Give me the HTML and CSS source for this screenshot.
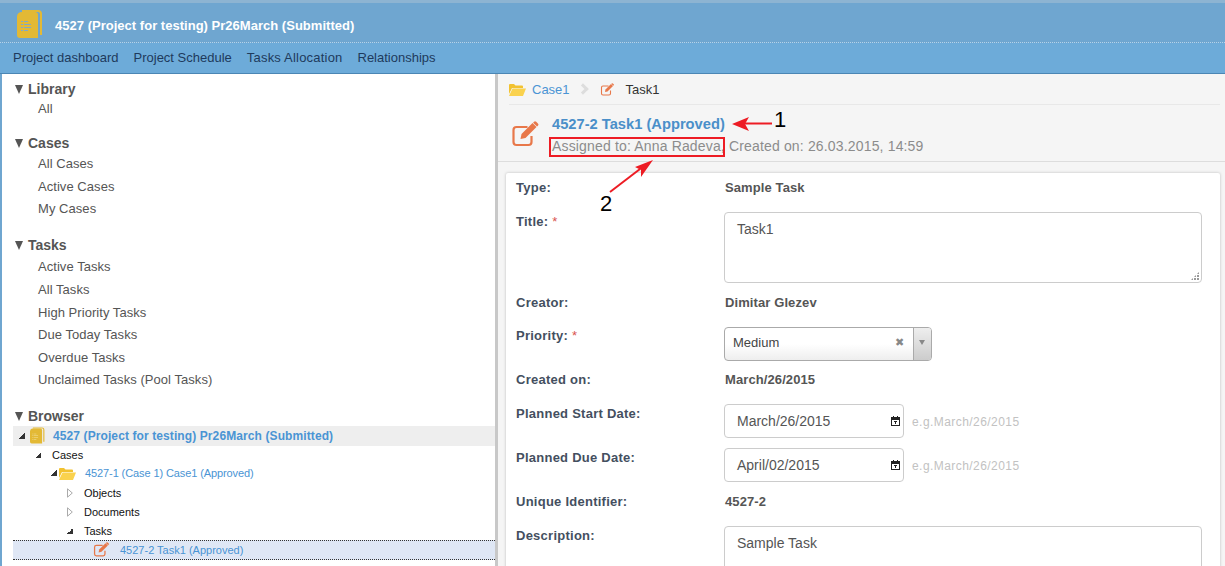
FILE: index.html
```html
<!DOCTYPE html>
<html lang="en">
<head>
    <meta charset="UTF-8">
    <meta name="viewport" content="width=device-width, initial-scale=1.0">
    <title>4527 Task1</title>
    <link rel="stylesheet" href="styles.css">
</head>
<body>

<svg width="0" height="0" class="defs">
    <symbol id="book" viewBox="0 0 26 28">
        <path d="M5 1h16a3 3 0 0 1 3 3v21" fill="none" stroke="#e3b935" stroke-width="2"/>
        <path d="M0 6a5 5 0 0 1 5-4h13a3 3 0 0 1 3 3v23H3a3 3 0 0 1-3-3z" fill="#e3b935"/>
        <path d="M4 11h2v1H4zm0 3h2v1H4zm0 3h2v1H4zm0 3h2v1H4zm3-9h4v1H7zm0 3h7v1H7zm0 3h7v1H7zm0 3h4v1H7z" fill="currentColor"/>
    </symbol>
    <symbol id="edit" viewBox="0 0 28 26">
        <path d="M20 15v6a3 3 0 0 1-3 3H5a3 3 0 0 1-3-3V9a3 3 0 0 1 3-3h11" fill="none" stroke="#e8784a" stroke-width="2.2"/>
        <path d="M10 13 21 2l4 4-11 11-5 1z" fill="#e8784a"/>
        <path d="M22.5.8a1.6 1.6 0 0 1 2.2 0l1.7 1.7a1.6 1.6 0 0 1 0 2.2L25.500 5.600 21.600 1.700z" fill="#e8784a"/>
    </symbol>
    <symbol id="folder" viewBox="0 0 17 13">
        <path d="M0 2a1 1 0 0 1 1-1h4l1.500 1.500H13a1 1 0 0 1 1 1V5H3L0 11z" fill="#f2c230"/>
        <path d="M3.500 5.500H17L14 13H0z" fill="#fad24e"/>
    </symbol>
    <symbol id="cal" viewBox="0 0 9 10">
        <path d="M0 1h2V0h1v1h3V0h1v1h2v9H0zm1 3v5h7V4z" fill="#222"/>
        <path d="M3 5h3v1H3zm1 1h1v2H4z" fill="#222"/>
    </symbol>
    <symbol id="closed" viewBox="0 0 6 10">
        <path d="M.5.800 5.300 5 .5 9.200z" fill="#fff" stroke="#aaa"/>
    </symbol>
</svg>

<div class="header">
    <svg class="header-icon"><use href="#book"/></svg>
    <span class="header-title">4527 (Project for testing) Pr26March (Submitted)</span>
</div>
<div class="nav">
    <a>Project dashboard</a>
    <a>Project Schedule</a>
    <a>Tasks Allocation</a>
    <a>Relationships</a>
</div>

<div class="main">
    <div class="left">
        <div class="section">
            <h3><span class="tri"></span>Library</h3>
            <ul class="links links-first">
                <li>All</li>
            </ul>
        </div>
        <div class="section">
            <h3><span class="tri"></span>Cases</h3>
            <ul class="links">
                <li>All Cases</li>
                <li>Active Cases</li>
                <li>My Cases</li>
            </ul>
        </div>
        <div class="section">
            <h3><span class="tri"></span>Tasks</h3>
            <ul class="links links-tasks">
                <li>Active Tasks</li>
                <li>All Tasks</li>
                <li>High Priority Tasks</li>
                <li>Due Today Tasks</li>
                <li>Overdue Tasks</li>
                <li>Unclaimed Tasks (Pool Tasks)</li>
            </ul>
        </div>
        <div class="section section-browser">
            <h3><span class="tri"></span>Browser</h3>
            <div class="tree">
                <div class="node node-root">
                    <span class="arrow open"></span>
                    <svg class="node-book"><use href="#book"/></svg>
                    <span class="node-link">4527 (Project for testing) Pr26March (Submitted)</span>
                </div>
                <div class="node lvl1"><span class="arrow open"></span>Cases</div>
                <div class="node lvl2">
                    <span class="arrow open"></span>
                    <svg class="node-folder"><use href="#folder"/></svg>
                    <span class="node-link case-link">4527-1 (Case 1) Case1 (Approved)</span>
                </div>
                <div class="node lvl3"><svg class="arrow-closed"><use href="#closed"/></svg>Objects</div>
                <div class="node lvl3"><svg class="arrow-closed"><use href="#closed"/></svg>Documents</div>
                <div class="node lvl3"><span class="arrow open"></span>Tasks</div>
                <div class="node node-selected">
                    <svg class="node-edit"><use href="#edit"/></svg>
                    <span class="node-link">4527-2 Task1 (Approved)</span>
                </div>
            </div>
        </div>
    </div>

    <div class="right">
        <div class="crumbs">
            <svg class="crumb-folder"><use href="#folder"/></svg>
            <a>Case1</a>
            <span class="crumb-sep"></span>
            <svg class="crumb-edit"><use href="#edit"/></svg>
            <span>Task1</span>
        </div>
        <div class="task-head">
            <svg class="task-icon"><use href="#edit"/></svg>
            <div>
                <div class="task-title">4527-2 Task1 (Approved)</div>
                <div class="task-sub">Assigned to: Anna Radeva, Created on: 26.03.2015, 14:59</div>
            </div>
        </div>

        <div class="card">
            <div class="row">
                <label>Type:</label>
                <div class="value">Sample Task</div>
            </div>
            <div class="row row-control row-title">
                <label>Title: <i>*</i></label>
                <div class="area area-title">Task1<span class="grip"></span></div>
            </div>
            <div class="row">
                <label>Creator:</label>
                <div class="value">Dimitar Glezev</div>
            </div>
            <div class="row row-control row-priority">
                <label>Priority: <i>*</i></label>
                <div class="select">
                    <span class="select-text">Medium</span>
                    <span class="select-x">&#10006;</span>
                    <span class="select-btn"></span>
                </div>
            </div>
            <div class="row">
                <label>Created on:</label>
                <div class="value">March/26/2015</div>
            </div>
            <div class="row row-control row-date">
                <label>Planned Start Date:</label>
                <div class="date">March/26/2015<svg class="cal"><use href="#cal"/></svg></div>
                <span class="hint">e.g.March/26/2015</span>
            </div>
            <div class="row row-control row-title">
                <label>Planned Due Date:</label>
                <div class="date">April/02/2015<svg class="cal"><use href="#cal"/></svg></div>
                <span class="hint">e.g.March/26/2015</span>
            </div>
            <div class="row">
                <label>Unique Identifier:</label>
                <div class="value">4527-2</div>
            </div>
            <div class="row row-control">
                <label>Description:</label>
                <div class="area">Sample Task</div>
            </div>
        </div>
    </div>
</div>

<!-- annotations drawn on top of the screenshot -->
<div class="mark-box"></div>
<svg class="marks" width="1225" height="566">
    <path d="M772 123.500H745" stroke="#ed1c24" stroke-width="2"/>
    <path d="M732 124 749 117 745 124 749 131z" fill="#ed1c24"/>
    <path d="M610 192 640 169" stroke="#ed1c24" stroke-width="2"/>
    <path d="M653 160 635 167 641 170 641 177z" fill="#ed1c24"/>
</svg>
<span class="mark-num num-1">1</span>
<span class="mark-num num-2">2</span>

</body>
</html>
```

FILE: styles.css
```css
* {
    box-sizing: border-box;
}

html, body {
    height: 566px;
    overflow: hidden;
}

body {
    margin: 0;
    font-family: "Liberation Sans", Arial, sans-serif;
    font-size: 13px;
    color: #555;
    background-color: #fff;
}

.defs {
    display: block;
    height: 0;
}

.header {
    display: flex;
    align-items: center;
    height: 43px;
    padding: 2px 0 0 17px;
    background-color: #6fa6d0;
    border-top: 3px solid #8db4d2;
    border-bottom: 1px dotted #b5d3ea;
}

.header-icon {
    width: 26px;
    height: 28px;
    color: #7fa9c9;
}

.header-title {
    margin: 3px 0 0 12px;
    color: #fff;
    font-weight: bold;
    font-size: 13px;
    letter-spacing: .02px;
}

.nav {
    display: flex;
    gap: 15px;
    height: 31px;
    padding: 7px 0 0 13px;
    background-color: #6dabd9;
    border-bottom: 1px solid #4b86b4;
    color: #1e3a5c;
    font-size: 13px;
}

.nav a:nth-child(3) {
    letter-spacing: .2px;
}

.main {
    display: flex;
    height: 492px;
    border-left: 2px solid #6fa6d0;
}

.left {
    width: 496px;
    flex: none;
    padding: 6px 0 0 11px;
    border-right: 3px solid #c8c8c8;
    overflow: hidden;
}

.section {
    margin-bottom: 15.300px;
}

.section-browser {
    margin: 0;
}

.section h3 {
    display: flex;
    align-items: center;
    margin: 0;
    height: 18px;
    font-size: 14px;
    color: #555;
}

.tri {
    width: 0;
    height: 0;
    margin: 0 5px 0 2px;
    border-left: 4.500px solid transparent;
    border-right: 4.500px solid transparent;
    border-top: 9px solid #555;
}

.links {
    list-style: none;
    margin: 0;
    padding: 1px 0 0 25px;
    line-height: 22.600px;
    letter-spacing: .05px;
    color: #555;
}

.links-first {
    line-height: 20px;
}

.links-tasks {
    padding-top: 2px;
}

.links li {
    white-space: nowrap;
}

.tree {
    margin-top: 1px;
    font-size: 11px;
    color: #111;
}

.node {
    display: flex;
    align-items: center;
    height: 19px;
}

.node-root {
    height: 20px;
    padding: 0 0 1px 6px;
    background-color: #eee;
    font-weight: bold;
    font-size: 12px;
    letter-spacing: .1px;
}

.node-link {
    color: #4a94d4;
    white-space: nowrap;
}

.case-link {
    letter-spacing: -.1px;
}

.lvl1 {
    height: 18px;
    padding-left: 22px;
}

.lvl2 {
    padding: 0 0 1px 38px;
}

.lvl3 {
    padding-left: 54px;
}

.arrow {
    flex: none;
    width: 6px;
    height: 6px;
    margin-right: 11px;
}

.arrow.open {
    background: linear-gradient(135deg, transparent 50%, #333 50%);
}

.arrow-closed {
    flex: none;
    width: 6px;
    height: 10px;
    margin-right: 11px;
}

.node-book {
    width: 15px;
    height: 17px;
    margin-left: -6px;
    margin-right: 8px;
    color: #f3e3a6;
}

.node-folder {
    width: 17px;
    height: 13px;
    margin-left: -9px;
    margin-right: 9px;
}

.node-selected {
    height: 20px;
    padding: 0 0 1px 80px;
    background-color: #dfe7f5;
    border-top: 1px dotted #333;
    border-bottom: 1px dotted #333;
}

.node-edit {
    width: 17px;
    height: 15px;
    margin-right: 10px;
}

.right {
    flex: 1;
    min-width: 0;
    background-color: #f5f5f5;
    padding: 0 5px 0 8px;
    overflow: hidden;
}

.crumbs {
    display: flex;
    align-items: center;
    height: 31px;
    margin-left: 3px;
    border-bottom: 1px solid #e8e8e8;
    font-size: 13px;
    color: #333;
}

.crumbs a {
    color: #4a94d4;
}

.crumb-folder {
    width: 17px;
    height: 13px;
    margin-right: 6px;
}

.crumb-sep {
    width: 8px;
    height: 8px;
    margin: 0 15px 0 9px;
    border-top: 3px solid #ddd;
    border-right: 3px solid #ddd;
    transform: rotate(45deg);
}

.crumb-edit {
    width: 15px;
    height: 13px;
    margin-left: -2px;
    margin-right: 11px;
}

.task-head {
    display: flex;
    height: 57px;
    margin: 0 -5px 0 -8px;
    padding: 9px 0 0 13px;
    border-bottom: 1px solid #ddd;
}

.task-icon {
    width: 29px;
    height: 26px;
    margin: 7px 12px 0 0;
}

.task-title {
    font-size: 14.700px;
    font-weight: bold;
    color: #4a8fc9;
    line-height: 20px;
}

.task-sub {
    margin-top: 3px;
    font-size: 14px;
    letter-spacing: .16px;
    color: #8c8c8c;
    line-height: 18px;
}

.card {
    margin-top: 11px;
    height: 400px;
    padding: 4px 0 0 10px;
    background-color: #fff;
    box-shadow: 0 0 3px #bbb;
    border-radius: 2px 2px 0 0;
}

.row {
    display: flex;
    align-items: flex-start;
    margin-bottom: 14px;
}

.row-control {
    margin-bottom: 8px;
}

.row-title {
    margin-bottom: 9px;
}

.row-date {
    margin-bottom: 10px;
}

.row label,
.row .value {
    padding-top: 1px;
    line-height: 20px;
    font-size: 13px;
    letter-spacing: .1px;
    font-weight: bold;
}

.row label {
    width: 208px;
    flex: none;
    color: #444f60;
    letter-spacing: .25px;
}

.row-control label {
    line-height: 18px;
}

.row-priority label {
    padding-top: 0;
}

.row i {
    color: #d9534f;
    font-style: normal;
    font-weight: normal;
}

.row .value {
    color: #555;
    margin-left: 1px;
}

.area {
    position: relative;
    width: 478px;
    height: 71px;
    padding: 6px 12px;
    border: 1px solid #ccc;
    border-radius: 4px;
    background-color: #fff;
    line-height: 20px;
    color: #555;
    font-size: 14px;
}

.grip {
    position: absolute;
    right: 2px;
    bottom: 2px;
    width: 8px;
    height: 8px;
    background: radial-gradient(circle at 1px 1px, #999 1px, transparent 1px) 0 0 / 3px 3px;
    clip-path: polygon(100% 0, 100% 100%, 0 100%);
}

.select {
    display: flex;
    align-items: center;
    width: 208px;
    height: 34px;
    padding: 0 0 3px 8px;
    border: 1px solid #aaa;
    border-radius: 4px;
    background: linear-gradient(#fff 50%, #eee);
    font-size: 13px;
    color: #444;
}

.select-text {
    flex: 1;
}

.select-x {
    font-size: 11px;
    color: #888;
    margin-right: 9px;
}

.select-btn {
    position: relative;
    width: 18px;
    height: 32px;
    margin-bottom: -3px;
    border-left: 1px solid #aaa;
    background: linear-gradient(#eee, #ccc);
    border-radius: 0 3px 3px 0;
}

.select-btn::after {
    content: "";
    position: absolute;
    left: 5px;
    top: 12px;
    border-left: 3px solid transparent;
    border-right: 3px solid transparent;
    border-top: 5px solid #888;
}

.date {
    display: flex;
    align-items: center;
    justify-content: space-between;
    width: 180px;
    height: 34px;
    padding: 0 3px 0 12px;
    border: 1px solid #ccc;
    border-radius: 4px;
    font-size: 14px;
    color: #555;
}

.cal {
    width: 9px;
    height: 10px;
}

.hint {
    height: 34px;
    margin-left: 8px;
    padding-top: 1px;
    line-height: 34px;
    font-size: 12px;
    letter-spacing: .44px;
    color: #c2c2c2;
}

.marks {
    position: absolute;
    left: 0;
    top: 0;
}

.mark-box {
    position: absolute;
    left: 549px;
    top: 137px;
    width: 176px;
    height: 20px;
    border: 2px solid #ed1c24;
}

.mark-num {
    position: absolute;
    color: #000;
    font-size: 22px;
    line-height: 22px;
}

.num-1 {
    left: 774px;
    top: 109px;
}

.num-2 {
    left: 600px;
    top: 193px;
}
```
